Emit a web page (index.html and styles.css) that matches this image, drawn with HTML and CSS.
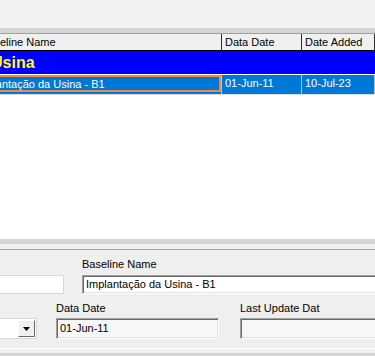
FILE: index.html
```html
<!DOCTYPE html>
<html>
<head>
<meta charset="utf-8">
<link rel="stylesheet" href="styles.css">
</head>
<body>
<div class="app">
  <div class="toparea"></div>
  <div class="band band-top"></div>
  <div class="list">
    <div class="row header">
      <div class="cell c1"><span class="shift-h">Baseline Name</span></div>
      <div class="cell c2">Data Date</div>
      <div class="cell c3">Date Added</div>
    </div>
    <div class="row group">
      <span class="group-text">Usina</span>
    </div>
    <div class="row selected">
      <div class="cell c1"><span class="focus"><span class="shift-r">Implantação da Usina - B1</span></span></div>
      <div class="cell c2">01-Jun-11</div>
      <div class="cell c3">10-Jul-23</div>
    </div>
    <div class="list-empty"></div>
  </div>
  <div class="band band-mid"></div>
  <div class="panel">
    <div class="labels labels1">
      <span class="lbl lbl-bn">Baseline Name</span>
    </div>
    <div class="fields fields1">
      <div class="field f-left"></div>
      <div class="field f-bn">Implantação da Usina - B1</div>
    </div>
    <div class="labels labels2">
      <span class="lbl lbl-dd">Data Date</span>
      <span class="lbl lbl-lu">Last Update Dat</span>
    </div>
    <div class="fields fields2">
      <div class="field combo">
        <span class="combo-btn"><svg width="7" height="4" viewBox="0 0 7 4"><path d="M0 0H7L3.5 4Z" fill="#000"/></svg></span>
      </div>
      <div class="field f-dd ro">01-Jun-11</div>
      <div class="field f-lu ro"></div>
    </div>
    <div class="panel-bottom"></div>
  </div>
  <div class="band band-bottom"></div>
</div>
</body>
</html>
```

FILE: styles.css
```css
* { box-sizing: border-box; }
html, body { margin: 0; padding: 0; }
body {
  width: 375px;
  height: 356px;
  overflow: hidden;
  background: #f0f0f0;
  font-family: "Liberation Sans", Arial, sans-serif;
  font-size: 11px;
  color: #000;
}
.app { width: 375px; overflow: hidden; }
.toparea { height: 28px; background: #f2f2f2; }
.band-top {
  height: 6px;
  background: #d4d4d4;
  border-bottom: 1px solid #a0a0a0;
}
.list { background: #fff; overflow: hidden; }
.row { display: flex; white-space: nowrap; }
.cell { flex: none; overflow: hidden; }
.c1 { width: 323px; margin-left: -101px; }
.c2 { width: 80px; }
.c3 { flex: 1; }
.header {
  height: 17px;
  background: #f0f0f0;
  border-bottom: 1px solid #000;
  line-height: 16px;
}
.header .cell { border-right: 1px solid #303030; padding-left: 3px; }
.header .c1 { padding-left: 0; }
.shift-h { display: inline-block; margin-left: 82px; }
.group {
  height: 23px;
  background: #0000ff;
  align-items: center;
}
.group-text {
  color: #ffff00;
  font-weight: bold;
  font-size: 16px;
  margin-left: -9px;
  line-height: 20px;
}
.selected {
  height: 19px;
  margin-top: 1px;
  background: #0078d7;
  color: #fff;
  line-height: 17px;
}
.selected .cell { border-right: 1px solid #a8c8e8; padding-left: 3px; }
.selected .c1 { padding-left: 0; }
.focus {
  display: block;
  height: 17px;
  border: 2px solid #f5883a;
  border-left: none;
  line-height: 14px;
  overflow: hidden;
}
.shift-r { display: inline-block; margin-left: 76px; }
.list-empty { height: 145px; border-top: 1px solid #e0e0e0; }
.band-mid {
  height: 10px;
  background: #d4d4d4;
  border-bottom: 5px solid #f0f0f0;
}
.panel {
  border-top: 1px solid #a0a0a0;
  background: #efefef;
  padding-top: 7px;
}
.labels { display: flex; height: 14px; line-height: 14px; }
.lbl { display: block; flex: none; }
.lbl-bn { margin-left: 82px; }
.lbl-dd { margin-left: 56px; width: 184px; }
.fields { display: flex; }
.fields1 { margin-top: 4px; margin-bottom: 7px; gap: 18px; }
.fields2 { margin-top: 3px; gap: 19px; }
.field {
  flex: none;
  border-top: 1px solid #a0a0a0;
  border-left: 1px solid #a0a0a0;
  border-right: 1px solid #ffffff;
  border-bottom: 1px solid #ffffff;
  box-shadow: inset 1px 1px 0 #696969, inset -1px -1px 0 #e3e3e3;
  background: #fff;
  padding-left: 3px;
  white-space: nowrap;
  overflow: hidden;
}
.fields1 .field { height: 19px; line-height: 17px; }
.fields2 .field { height: 21px; line-height: 19px; }
.f-left { width: 164px; margin-left: -100px; box-shadow: none; border-color: #d8d8d8; }
.f-bn { width: 320px; }
.combo {
  width: 137px;
  margin-left: -100px;
  display: flex;
  justify-content: flex-end;
  padding: 1px;
  box-shadow: none;
  border-color: #d8d8d8;
}
.combo-btn {
  width: 17px;
  height: 17px;
  background: #f0f0f0;
  border-top: 1px solid #ffffff;
  border-left: 1px solid #ffffff;
  border-right: 1px solid #696969;
  border-bottom: 1px solid #696969;
  display: flex;
  align-items: center;
  justify-content: center;
}
.f-dd { width: 163px; }
.f-lu { width: 160px; margin-left: 2px; }
.ro { background: #f7f7f7; }
.panel-bottom {
  height: 10px;
  border-bottom: 1px solid #ffffff;
}
.band-bottom { height: 10px; border-top: 4px solid #f0f0f0; background: #d4d4d4; }
```
